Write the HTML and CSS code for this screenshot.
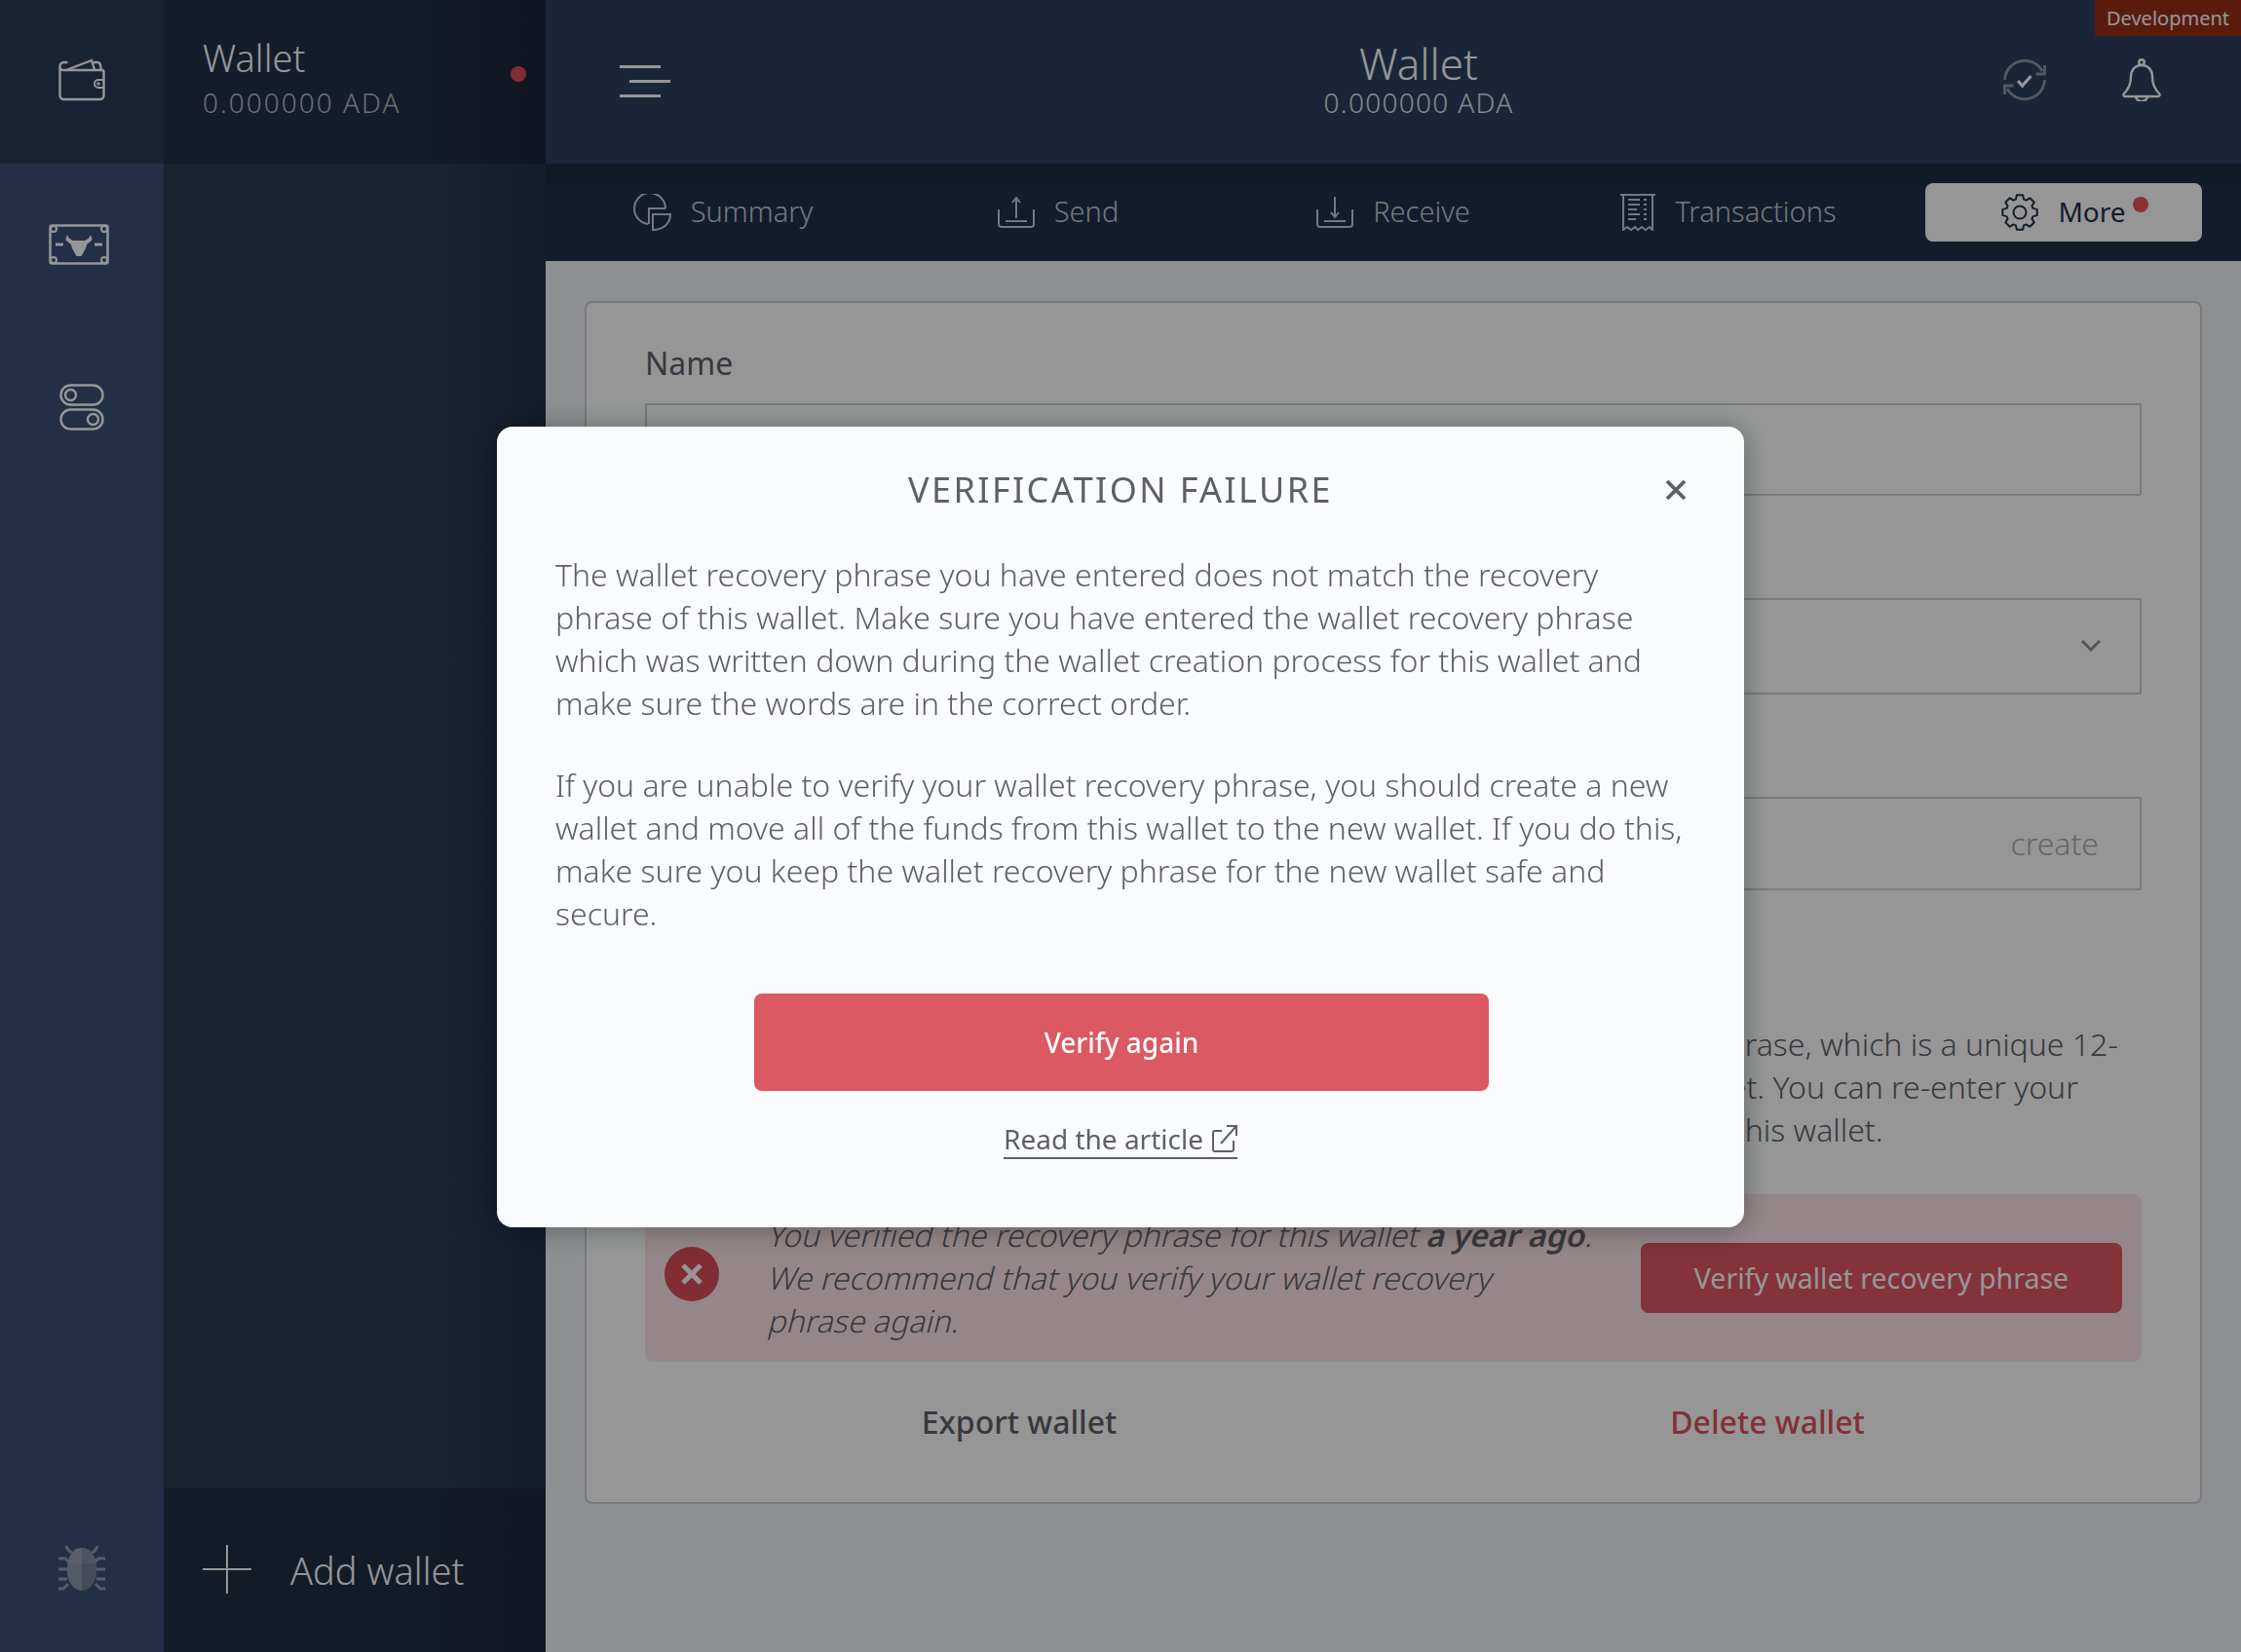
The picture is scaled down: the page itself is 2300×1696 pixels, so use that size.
FILE: index.html
```html
<!DOCTYPE html>
<html lang="en">
<head>
  <meta charset="UTF-8" />
  <title>Wallet settings</title>
  <link rel="stylesheet" href="styles.css">
</head>
<body>
  <div class="app">
    <aside class="rail">
      <div class="rail-head">
        <svg class="rail-wallet" width="48" height="44" viewBox="0 0 48 44" fill="none" stroke="#fafbfc" stroke-width="2.400">
          <path d="M1.500 8v30a4 4 0 0 0 4 4h37a4 4 0 0 0 4-4V14a2 2 0 0 0-2-2H5a3.500 3.500 0 0 1-3.500-4 4 4 0 0 1 4-4h4"/>
          <path d="M9 11.500 34 2l3 9.500"/>
          <path d="M36 4h4a3 3 0 0 1 3 3l1 5"/>
          <path d="M46 22h-5a4 4 0 0 0 0 8h5" stroke-width="2"/>
          <circle cx="41" cy="26" r="1" stroke-width="1.500"/>
        </svg>
      </div>
      <div class="rail-items">
        <svg width="62" height="42" viewBox="0 0 62 42" fill="none" stroke="#fafbfc" stroke-width="2.500">
          <rect x="1.500" y="1.500" width="59" height="39" rx="2"/>
          <g fill="#3b4f76" stroke-width="2">
            <circle cx="5" cy="5" r="3"/>
            <circle cx="57" cy="5" r="3"/>
            <circle cx="5" cy="37" r="3"/>
            <circle cx="57" cy="37" r="3"/>
          </g>
          <path d="M7 21h8M47 21h8" stroke-width="3"/>
          <path d="M19 11c-1 3-2 4-1 6l5 4 1 4 4.500 8h5l4.500-8 1-4 5-4c1-2 0-3-1-6-1 3-3 5-6 6H25c-3-1-5-3-6-6z" fill="#fafbfc" stroke="none"/>
        </svg>
        <svg class="rail-toggle" width="46" height="48" viewBox="0 0 46 48" fill="none" stroke="#fafbfc" stroke-width="2.400">
          <rect x="1.500" y="1.500" width="43" height="20" rx="10"/>
          <circle cx="11.500" cy="11.500" r="5.500"/>
          <rect x="1.500" y="26.500" width="43" height="20" rx="10"/>
          <circle cx="34.500" cy="36.500" r="5.500"/>
        </svg>
      </div>
      <div class="rail-bug">
        <svg width="48" height="46" viewBox="0 0 48 46">
          <path d="M8 0c1 4 3 6 6 7M40 0c-1 4-3 6-6 7M0 13h7l3 3M48 13h-7l-3 3M0 24h9M48 24h-9M0 34h9M48 34h-9M0 44h5l5-5M48 44h-5l-5-5" fill="none" stroke="#8e9bb2" stroke-width="3"/>
          <path d="M24 2c-4 0-7 1-9 4-3 3-5 7-6 12h15z" fill="#969eaf"/>
          <path d="M9 18v9c0 10 7 19 15 19V18z" fill="#8c96a7"/>
          <path d="M24 2c4 0 7 1 9 4 3 3 5 7 6 12H24z" fill="#828c9e"/>
          <path d="M39 18v9c0 10-7 19-15 19V18z" fill="#757f91"/>
        </svg>
      </div>
    </aside>

    <aside class="sidebar">
      <div class="active-wallet">
        <div>
          <div class="active-name">Wallet</div>
          <div class="active-amount">0.000000 ADA</div>
        </div>
        <span class="dot"></span>
      </div>
      <div class="sidebar-fill"></div>
      <div class="add-wallet">
        <svg width="50" height="50" viewBox="0 0 50 50" stroke="#fafbfc" stroke-width="2"><path d="M0 25h50M25 0v50"/></svg>
        <span>Add wallet</span>
      </div>
    </aside>

    <main class="main">
      <header class="topbar">
        <div class="burger"><span></span><span class="burger-mid"></span><span></span></div>
        <div class="top-title">
          <div class="top-name">Wallet</div>
          <div class="top-amount">0.000000 ADA</div>
        </div>
        <div class="top-icons">
          <svg width="44" height="44" viewBox="0 0 44 44" fill="none" stroke="#8b94a4" stroke-width="2.800">
            <path d="M1.500 22A20.500 20.500 0 0 1 40 13"/>
            <path d="M42.500 7v9h-9"/>
            <path d="M42.500 22A20.500 20.500 0 0 1 4 31"/>
            <path d="M1.500 37v-9h9"/>
            <path d="M15 23l4.500 5 9-10" stroke="#fafbfc" stroke-width="3.200"/>
          </svg>
          <svg width="40" height="44" viewBox="0 0 40 44" fill="none" stroke="#fafbfc" stroke-width="2.400">
            <path d="M20 7c-7 0-11 5-11 12 0 7-2 12-7 17-1 1-1 3 1 3h34c2 0 2-2 1-3-5-5-7-10-7-17 0-7-4-12-11-12z"/>
            <circle cx="20" cy="4" r="2.800"/>
            <path d="M14 39a6 5 0 0 0 12 0"/>
          </svg>
        </div>
        <div class="env-badge">Development</div>
      </header>

      <nav class="tabs">
        <a class="tab">
          <svg width="39" height="38" viewBox="0 0 39 38" fill="none" stroke="#c3c8d0" stroke-width="2">
            <path d="M33 15A16 16 0 1 0 15 31"/>
            <path d="M33 15H16v16"/>
            <path d="M38 21H20v16c10 0 18-6 18-16z"/>
          </svg>
          <span>Summary</span>
        </a>
        <a class="tab">
          <svg width="38" height="32" viewBox="0 0 38 32" fill="none" stroke="#c3c8d0" stroke-width="2">
            <path d="M1 13v15a3 3 0 0 0 3 3h30a3 3 0 0 0 3-3V13"/>
            <path d="M19 22V2M15 6l4-5 4 5M8 25h22"/>
          </svg>
          <span>Send</span>
        </a>
        <a class="tab">
          <svg width="38" height="32" viewBox="0 0 38 32" fill="none" stroke="#c3c8d0" stroke-width="2">
            <path d="M1 13v15a3 3 0 0 0 3 3h30a3 3 0 0 0 3-3V13"/>
            <path d="M19 0v20M15 16l4 5 4-5M8 25h22"/>
          </svg>
          <span>Receive</span>
        </a>
        <a class="tab">
          <svg width="36" height="38" viewBox="0 0 36 38" fill="none" stroke="#c3c8d0" stroke-width="2">
            <path d="M0 1h36M3 1v36l4-3 4 3 4-3 3 3 4-3 4 3 4-3 3 3V1"/>
            <path d="M8 6h12M8 11h12M8 16h9M8 21h12M8 26h8M24 6h3M24 11h3M24 16h3M24 21h3M24 26h3"/>
          </svg>
          <span>Transactions</span>
        </a>
        <a class="tab tab-active">
          <svg width="38" height="38" viewBox="0 0 38 38" fill="none" stroke="#233148" stroke-width="2" stroke-linejoin="round">
            <path d="M14.900 5.600 15.900 1.300H22.100L23.100 5.600A14 14 0 0 1 25.600 6.600L29.300 4.300 33.800 8.700 31.400 12.400A14 14 0 0 1 32.400 14.900L36.700 15.900V22.100L32.400 23.100A14 14 0 0 1 31.400 25.600L33.800 29.300 29.300 33.800 25.600 31.400A14 14 0 0 1 23.100 32.400L22.100 36.700H15.900L14.900 32.400A14 14 0 0 1 12.400 31.400L8.700 33.800 4.300 29.300 6.600 25.600A14 14 0 0 1 5.600 23.100L1.300 22.100V15.900L5.600 14.900A14 14 0 0 1 6.600 12.400L4.300 8.700 8.700 4.300 12.400 6.600A14 14 0 0 1 14.900 5.600Z"/>
            <circle cx="19" cy="19" r="6.500"/>
          </svg>
          <span class="tab-label">More<span class="tab-dot"></span></span>
        </a>
      </nav>

      <section class="content">
        <div class="panel">
          <label class="field-label field-first">Name</label>
          <div class="input input-name">Wallet</div>

          <label class="field-label field-next">Transaction assurance security level</label>
          <div class="input input-select">
            Strict
            <svg class="chevron" width="20" height="12" viewBox="0 0 20 12" fill="none" stroke="#8b8f96" stroke-width="3"><path d="M1 1l9 9 9-9"/></svg>
          </div>

          <label class="field-label field-next">Spending password</label>
          <div class="input input-action">You still don't have password <span class="action">create</span></div>

          <label class="field-label field-next">Wallet recovery phrase verification</label>
          <p class="recovery-text">Funds in this wallet can only be recovered using the correct wallet recovery phrase, which is a unique 12-<br>word string you were shown and asked to write down when creating this wallet. You can re-enter your<br>wallet recovery phrase to verify that you have the correct recovery phrase for this wallet.</p>

          <div class="banner">
            <span class="banner-icon">
              <svg width="24" height="24" viewBox="0 0 24 24" stroke="#fafbfc" stroke-width="5" fill="none"><path d="M3 3l18 18M21 3L3 21"/></svg>
            </span>
            <p class="banner-text">
              <span class="banner-line">You verified the recovery phrase for this wallet <b>a year ago</b>.</span>
              <span class="banner-line">We recommend that you verify your wallet recovery</span>
              <span class="banner-line">phrase again.</span>
            </p>
            <button class="banner-btn">Verify wallet recovery phrase</button>
          </div>

          <div class="panel-actions">
            <a class="panel-link">Export wallet</a>
            <a class="panel-link panel-link-red">Delete wallet</a>
          </div>
        </div>
      </section>
    </main>
  </div>

  <div class="overlay">
    <div class="modal">
      <div class="modal-head">
        <h2>VERIFICATION FAILURE</h2>
        <svg class="modal-close" width="22" height="22" viewBox="0 0 22 22" stroke="#5e6066" stroke-width="3.800" fill="none"><path d="M2 2l18 18M20 2L2 20"/></svg>
      </div>
      <p class="modal-text">The wallet recovery phrase you have entered does not match the recovery phrase of this wallet. Make sure you have entered the wallet recovery phrase which was written down during the wallet creation process for this wallet and make sure the words are in the correct order.</p>
      <p class="modal-text">If you are unable to verify your wallet recovery phrase, you should create a new wallet and move all of the funds from this wallet to the new wallet. If you do this, make sure you keep the wallet recovery phrase for the new wallet safe and secure.</p>
      <button class="modal-btn">Verify again</button>
      <a class="modal-link">Read the article
        <svg width="26" height="28" viewBox="0 0 26 28" fill="none" stroke="#5e6066" stroke-width="2"><path d="M10 6H3a2 2 0 0 0-2 2v17a2 2 0 0 0 2 2h17a2 2 0 0 0 2-2V16"/><path d="M9 19 24 2M15 1h10v10"/></svg>
      </a>
    </div>
  </div>
</body>
</html>
```

FILE: styles.css
```css
* {
  box-sizing: border-box;
}

html, body {
  margin: 0;
  height: 100%;
}

body {
  font-family: "Noto Sans", sans-serif;
  overflow: hidden;
  color: #5e6066;
}

.app {
  display: flex;
  height: 1696px;
  background-color: #ebeff2;
}

/* far left icon column */
.rail {
  width: 168px;
  display: flex;
  flex-direction: column;
  background-color: #3b4f76;
}

.rail-head {
  height: 168px;
  display: flex;
  align-items: center;
  justify-content: center;
  background-color: #2a3a55;
}

.rail-wallet {
  margin-top: -4px;
}

.rail-items {
  flex: 1;
  display: flex;
  flex-direction: column;
  align-items: center;
  padding-top: 62px;
}

.rail-items svg {
  margin-right: 6px;
}

.rail-toggle {
  margin-top: 122px;
  margin-right: 0 !important;
}

.rail-bug {
  height: 168px;
  display: flex;
  justify-content: center;
  padding-top: 59px;
}

/* wallet list */
.sidebar {
  width: 392px;
  display: flex;
  flex-direction: column;
  background: linear-gradient(to right, #2a3953 75%, #233048);
}

.active-wallet {
  height: 168px;
  display: flex;
  align-items: center;
  justify-content: space-between;
  padding: 0 20px 0 40px;
  background: linear-gradient(to right, #232f45 60%, #1c2638);
}

.active-name {
  font-size: 38px;
  font-weight: 300;
  line-height: 50px;
  color: #fafbfc;
  margin-top: -10px;
}

.active-amount {
  font-size: 28px;
  font-weight: 300;
  line-height: 38px;
  letter-spacing: 2px;
  color: #b3b8c0;
  margin-top: 2px;
}

.dot {
  width: 16px;
  height: 16px;
  border-radius: 50%;
  background-color: #d64c56;
  margin-top: -16px;
}

.sidebar-fill {
  flex: 1;
}

.add-wallet {
  height: 168px;
  display: flex;
  align-items: center;
  gap: 40px;
  padding-left: 40px;
  font-size: 38px;
  font-weight: 300;
  color: #fafbfc;
  background: linear-gradient(to right, #212d41 70%, #1e293c);
}

.add-wallet svg {
  margin-bottom: 3px;
}

/* right part */
.main {
  flex: 1;
  display: flex;
  flex-direction: column;
  min-width: 0;
}

.topbar {
  height: 168px;
  display: flex;
  align-items: center;
  padding: 0 82px 0 76px;
  position: relative;
  background-color: #2c3f5d;
}

.burger {
  width: 52px;
  display: flex;
  flex-direction: column;
  gap: 12px;
  margin-top: -2px;
}

.burger span {
  display: block;
  width: 42px;
  height: 3px;
  background-color: #fafbfc;
}

.burger .burger-mid {
  margin-left: 10px;
}

.top-title {
  flex: 1;
  padding-left: 168px;
  text-align: center;
}

.top-name {
  font-size: 44px;
  font-weight: 300;
  line-height: 50px;
  color: #fafbfc;
  margin-top: -4px;
}

.top-amount {
  font-size: 28px;
  font-weight: 300;
  line-height: 38px;
  letter-spacing: 1.300px;
  color: #dfe2e6;
  margin-top: -4px;
}

.top-icons {
  display: flex;
  align-items: center;
  gap: 78px;
  margin-top: -4px;
}

.env-badge {
  position: absolute;
  top: 0;
  right: 0;
  width: 150px;
  height: 37px;
  text-align: center;
  font-size: 20px;
  line-height: 37px;
  color: #fafbfc;
  background-color: #962d14;
}

.tabs {
  height: 100px;
  display: flex;
  gap: 60px;
  padding: 20px 40px;
  background: linear-gradient(to bottom, #1f2c40 20px, #213046 24px);
}

.tab {
  flex: 1;
  height: 60px;
  display: flex;
  align-items: center;
  justify-content: center;
  gap: 20px;
  font-size: 29px;
  font-weight: 300;
  color: #c3c8d0;
  border-radius: 8px;
}

.tab span {
  margin-top: -3px;
}

.tab-active {
  gap: 20px;
  font-size: 28px;
  color: #233148;
  font-weight: 400;
  background-color: #fafbfc;
}

.tab-label {
  position: relative;
}

.tab .tab-dot {
  position: absolute;
  top: 4px;
  right: -23px;
  margin: 0;
  width: 16px;
  height: 16px;
  border-radius: 50%;
  background-color: #e8505c;
}

.content {
  flex: 1;
  padding: 41px 40px 0;
}

.panel {
  padding: 40px 60px 60px;
  background-color: #fafbfc;
  border: 2px solid #c6cdd6;
  border-radius: 8px;
}

.field-label {
  display: block;
  font-size: 32px;
  line-height: 44px;
  margin-bottom: 20px;
}

.field-first {
  margin-bottom: 19px;
}

.field-next {
  margin-top: 41px;
}

.input {
  position: relative;
  height: 95px;
  display: flex;
  align-items: center;
  justify-content: space-between;
  padding: 0 42px 0 30px;
  font-size: 32px;
  font-weight: 300;
  border: 2px solid #c6cdd6;
  border-radius: 2px;
}

.input-select {
  height: 99px;
  padding-right: 40px;
}

.input-action {
  height: 96px;
}

.chevron {
  margin-top: -2px;
}

.action {
  color: #a9abb0;
  margin-top: -2px;
}

.recovery-text {
  margin: 51px 0 44px;
  font-size: 32px;
  font-weight: 300;
  line-height: 44px;
  white-space: nowrap;
}

.banner {
  height: 172px;
  display: flex;
  align-items: center;
  padding: 0 20px;
  background-color: #f8e2e4;
  border-radius: 8px;
}

.banner-icon {
  width: 56px;
  height: 56px;
  flex: none;
  display: flex;
  align-items: center;
  justify-content: center;
  margin-top: -8px;
  border-radius: 50%;
  background-color: #d64c56;
}

.banner-text {
  flex: 1;
  margin: 0 0 0 52px;
  font-size: 32px;
  font-weight: 300;
  line-height: 44px;
  white-space: nowrap;
}

.banner-line {
  display: block;
  transform: skewX(-14deg);
  transform-origin: left center;
}

.banner-text b {
  font-weight: 600;
}

.banner-btn {
  width: 494px;
  height: 72px;
  flex: none;
  border: none;
  border-radius: 8px;
  font-family: inherit;
  font-size: 28.500px;
  color: #fafbfc;
  background-color: #da5660;
}

.panel-actions {
  display: flex;
  margin-top: 40px;
}

.panel-link {
  flex: 1;
  text-align: center;
  font-size: 32px;
  font-weight: 500;
  line-height: 44px;
}

.panel-link-red {
  color: #d9505a;
}

/* dialog over the page */
.overlay {
  position: fixed;
  inset: 0;
  display: flex;
  align-items: center;
  justify-content: center;
  background-color: rgba(0, 0, 0, 0.4);
}

.modal {
  width: 1280px;
  height: 822px;
  display: flex;
  flex-direction: column;
  margin-top: 2px;
  padding: 40px 60px 0;
  background-color: #fafbfc;
  border-radius: 16px;
  box-shadow: 0 2px 30px rgba(0, 0, 0, 0.35);
}

.modal-head {
  position: relative;
  margin-bottom: 40px;
}

.modal-head h2 {
  margin: 0;
  text-align: center;
  font-size: 36px;
  font-weight: 400;
  line-height: 50px;
  letter-spacing: 2.400px;
}

.modal-close {
  position: absolute;
  top: 14px;
  right: -1px;
}

.modal-text {
  margin: 0 0 40px;
  font-size: 32px;
  font-weight: 300;
  line-height: 44px;
}

.modal-text + .modal-text {
  margin-bottom: 60px;
}

.modal-btn {
  width: 754px;
  height: 100px;
  flex: none;
  align-self: center;
  margin-left: 2px;
  border: none;
  border-radius: 8px;
  font-family: inherit;
  font-size: 28px;
  font-weight: 500;
  color: #fafbfc;
  background-color: #db5962;
}

.modal-link {
  align-self: center;
  display: flex;
  align-items: center;
  gap: 9px;
  margin-top: 30px;
  font-size: 28px;
  line-height: 38px;
  border-bottom: 2px solid #5e6066;
}
```
